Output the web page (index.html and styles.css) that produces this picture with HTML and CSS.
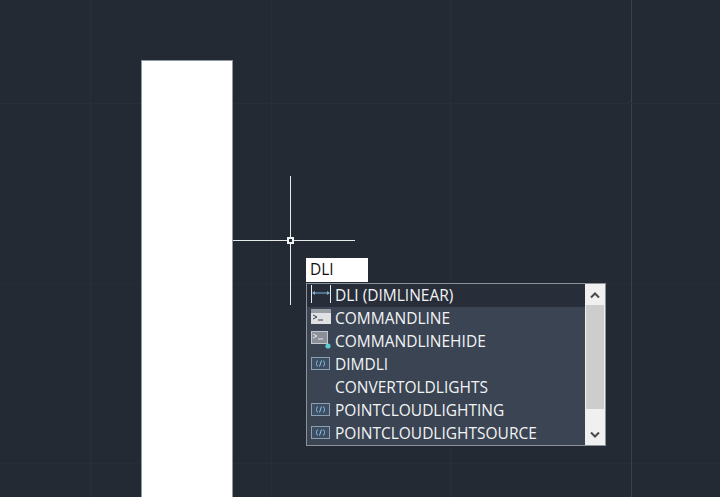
FILE: index.html
```html
<!DOCTYPE html>
<html lang="en">
<head>
    <meta charset="UTF-8">
    <title>Command Input</title>
    <link rel="stylesheet" href="styles.css">
</head>
<body>
    <div class="canvas">
        <div class="sheet"></div>

        <!-- crosshair -->
        <div class="cross-h"></div>
        <div class="cross-v"></div>
        <div class="pickbox"></div>

        <div class="cmd-input">DLI</div>

        <div class="palette">
            <div class="list">
                <div class="row active">
                    <svg class="icon" viewBox="0 0 20 18"><path d="M.5 0v18M19.5 0v18" stroke="#e8edf2" fill="none"/><path d="M2 8h16" stroke="#7fb2dc" fill="none"/><path d="M1 8l3-2v4zM19 8l-3-2v4z" fill="#7fb2dc"/></svg>
                    <span>DLI (DIMLINEAR)</span>
                </div>
                <div class="row">
                    <svg class="icon" viewBox="0 0 20 18"><rect y="1" width="20" height="15" fill="#dfe1e4"/><rect y="1" width="20" height="4" fill="#9a9ea5"/><path d="M2 7l4 2-4 2M7 12h5" stroke="#3a3f48" fill="none"/></svg>
                    <span>COMMANDLINE</span>
                </div>
                <div class="row">
                    <svg class="icon" viewBox="0 0 20 18"><rect x=".5" y=".5" width="16" height="12" fill="#8b9098" stroke="#c4c8cc"/><path d="M2 3l4 2-4 2M7 8h5" stroke="#e4e6e8" fill="none"/><circle cx="17" cy="15" r="2.6" fill="#5fc9d0"/></svg>
                    <span>COMMANDLINEHIDE</span>
                </div>
                <div class="row">
                    <svg class="icon" viewBox="0 0 20 18"><use href="#lisp"/></svg>
                    <span>DIMDLI</span>
                </div>
                <div class="row">
                    <span class="icon"></span>
                    <span>CONVERTOLDLIGHTS</span>
                </div>
                <div class="row">
                    <svg class="icon" viewBox="0 0 20 18"><use href="#lisp"/></svg>
                    <span>POINTCLOUDLIGHTING</span>
                </div>
                <div class="row">
                    <svg class="icon" viewBox="0 0 20 18"><use href="#lisp"/></svg>
                    <span>POINTCLOUDLIGHTSOURCE</span>
                </div>
            </div>
            <div class="scrollbar">
                <div class="arrow">
                    <svg viewBox="0 0 12 8" width="12" height="8"><path d="M2 6.5l4-4 4 4" stroke="#4a4a4a" stroke-width="2" fill="none"/></svg>
                </div>
                <div class="track"><div class="thumb"></div></div>
                <div class="arrow">
                    <svg viewBox="0 0 12 8" width="12" height="8"><path d="M2 1.5l4 4 4-4" stroke="#4a4a4a" stroke-width="2" fill="none"/></svg>
                </div>
            </div>
        </div>
    </div>

    <svg class="defs" width="0" height="0">
        <symbol id="lisp" viewBox="0 0 20 18">
            <rect x=".5" y="3.5" width="18" height="12" fill="#3f4f63" stroke="#8d9fb2"/>
            <path d="M7 6.5c-2 1-2 5 0 6M12 6.5c2 1 2 5 0 6M8.5 12.5l2-6" stroke="#8fc3ea" fill="none"/>
        </symbol>
    </svg>
</body>
</html>
```
FILE: styles.css
```css
html, body {
    margin: 0;
    padding: 0;
    height: 100%;
    overflow: hidden;
}
.canvas {
    position: relative;
    width: 720px;
    height: 497px;
    overflow: hidden;
    background-color: #232a33;
    background-image:
        linear-gradient(#282f39, #282f39),
        linear-gradient(#272e38, #272e38),
        linear-gradient(#282f39, #282f39),
        linear-gradient(#282f39, #282f39),
        linear-gradient(#39414d, #39414d),
        linear-gradient(#272e38, #272e38),
        linear-gradient(#272e38, #272e38);
    background-size: 1px 100%, 1px 100%, 1px 100%, 100% 1px, 1px 100%, 100% 1px, 100% 1px;
    background-position: 90px 0, 271px 0, 450px 0, 0 103px, 631px 0, 0 283px, 0 463px;
    background-repeat: no-repeat;
}
.defs {
    position: absolute;
}
.sheet {
    position: absolute;
    left: 141px;
    top: 60px;
    width: 90px;
    height: 436px;
    background: #fff;
    border: 1px solid #8f98a4;
    border-bottom: 0;
}
.cross-h {
    position: absolute;
    left: 233px;
    top: 240px;
    width: 122px;
    height: 1px;
    background: #e6e8ea;
}
.cross-v {
    position: absolute;
    left: 290px;
    top: 176px;
    width: 1px;
    height: 129px;
    background: #e6e8ea;
}
.pickbox {
    position: absolute;
    left: 287px;
    top: 237px;
    width: 3px;
    height: 3px;
    border: 2px solid #eef0f2;
    background: #232a33;
}
.cmd-input {
    position: absolute;
    left: 306px;
    top: 258px;
    width: 58px;
    height: 24px;
    padding-left: 4px;
    background: #fff;
    color: #111;
    font: 15.5px/22px "Open Sans", "Noto Sans", sans-serif;
}
.palette {
    position: absolute;
    left: 306px;
    top: 283px;
    width: 298px;
    height: 161px;
    display: flex;
    border: 1px solid #8c929a;
    font: 15.5px/23px "Open Sans", "Noto Sans", sans-serif;
    color: #f2f4f6;
}
.list {
    flex: 1;
    background: #3b4452;
}
.row {
    display: flex;
    align-items: flex-start;
    gap: 4px;
    height: 23px;
    padding-left: 4px;
}
.row.active {
    background: #282e39;
}
.icon {
    display: block;
    flex: none;
    width: 20px;
    height: 18px;
    margin-top: 1px;
}
.scrollbar {
    width: 20px;
    display: flex;
    flex-direction: column;
    background: #f0f0f0;
}
.arrow {
    height: 21px;
    display: flex;
    align-items: center;
    justify-content: center;
}
.track {
    flex: 1;
}
.thumb {
    height: 104px;
    margin: 0 1px;
    background: #cdcdcd;
}
```
